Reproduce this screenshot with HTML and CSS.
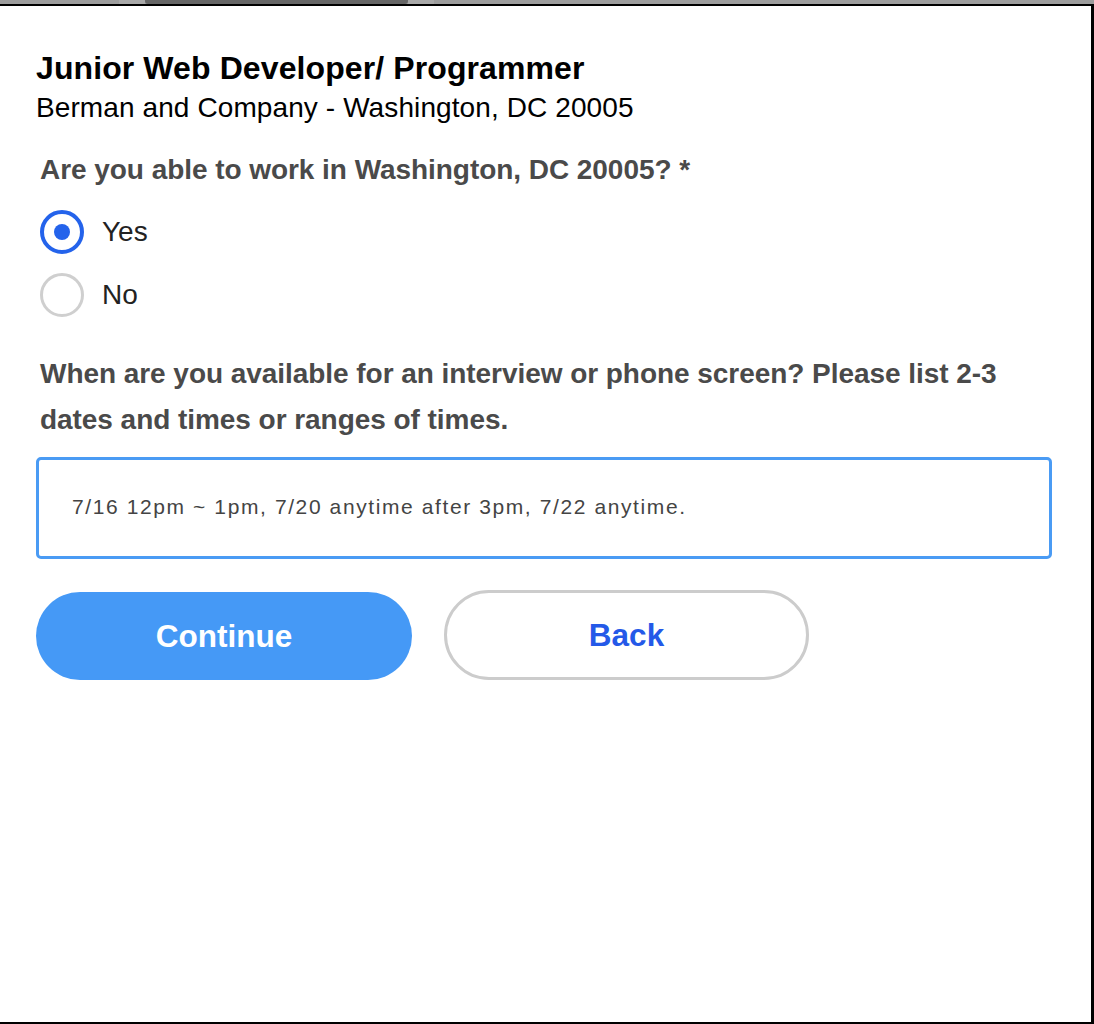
FILE: index.html
```html
<!DOCTYPE html>
<html lang="en">
<head>
<meta charset="utf-8">
<title>Junior Web Developer/ Programmer</title>
<link rel="stylesheet" href="styles.css">
</head>
<body>
<div class="topbar">
  <div class="topbar-gap"></div>
  <div class="topbar-glow"></div>
  <div class="topbar-tab"></div>
  <div class="topbar-glow"></div>
</div>
<main class="frame">
  <div class="content">
    <h1 class="title">Junior Web Developer/ Programmer</h1>
    <p class="company">Berman and Company - Washington, DC 20005</p>

    <div class="question q-location">
      <div class="q-label">Are you able to work in Washington, DC 20005? *</div>
      <div class="options">
        <div class="option">
          <span class="radio checked"><span class="radio-dot"></span></span>
          <span class="option-text">Yes</span>
        </div>
        <div class="option">
          <span class="radio"></span>
          <span class="option-text">No</span>
        </div>
      </div>
    </div>

    <div class="question q-availability">
      <div class="q-label q-label-tall">When are you available for an interview or phone screen? Please list 2-3 dates and times or ranges of times.</div>
      <div class="text-input">7/16 12pm ~ 1pm, 7/20 anytime after 3pm, 7/22 anytime.</div>
    </div>

    <div class="actions">
      <button class="btn btn-primary" type="button">Continue</button>
      <button class="btn btn-secondary" type="button">Back</button>
    </div>
  </div>
</main>
</body>
</html>
```

FILE: styles.css
```css
* {
  box-sizing: border-box;
}

html, body {
  margin: 0;
  padding: 0;
  background: #ffffff;
}

body {
  width: 1094px;
  height: 1024px;
  overflow: hidden;
  font-family: "Liberation Sans", Arial, Helvetica, sans-serif;
}

.topbar {
  height: 4px;
  display: flex;
  background: #9d9d9d;
}

.topbar-gap {
  width: 119px;
}

.topbar-glow {
  width: 26px;
  background: #a9a9a9;
}

.topbar-tab {
  width: 263px;
  background: #666666;
  border-radius: 0 0 3px 3px;
}

.frame {
  height: 1020px;
  border-top: 2px solid #000000;
  border-right: 3px solid #000000;
  border-bottom: 2px solid #000000;
  background: #ffffff;
}

.content {
  padding: 44px 39px 0 36px;
}

.title {
  margin: 0;
  font-size: 32px;
  line-height: 36px;
  font-weight: 700;
  color: #000000;
  letter-spacing: 0.1px;
}

.company {
  margin: 6px 0 0;
  font-size: 28px;
  line-height: 32px;
  font-weight: 400;
  color: #000000;
  letter-spacing: 0.1px;
}

.question {
  padding-left: 4px;
}

.q-location {
  margin-top: 30px;
}

.q-label {
  font-size: 28px;
  line-height: 32px;
  font-weight: 700;
  color: #4a4a4a;
  letter-spacing: -0.05px;
}

.q-label-tall {
  line-height: 46px;
}

.options {
  display: flex;
  flex-direction: column;
  gap: 19px;
  margin-top: 24px;
}

.option {
  display: flex;
  align-items: center;
  gap: 18px;
  height: 44px;
}

.radio {
  width: 44px;
  height: 44px;
  border-radius: 50%;
  border: 3px solid #cfcfcf;
  display: flex;
  align-items: center;
  justify-content: center;
  flex: none;
}

.radio.checked {
  border: 4px solid #2463eb;
}

.radio-dot {
  width: 16px;
  height: 16px;
  border-radius: 50%;
  background: #2463eb;
}

.option-text {
  font-size: 28px;
  line-height: 32px;
  color: #222222;
}

.q-availability {
  margin-top: 34px;
  padding-left: 0;
}

.q-availability .q-label {
  padding-left: 4px;
}

.text-input {
  margin-top: 14px;
  height: 102px;
  border: 3px solid #4a9bf4;
  border-radius: 5px;
  padding: 35px 33px 0;
  font-size: 21px;
  line-height: 24px;
  color: #444444;
  letter-spacing: 1.6px;
}

.actions {
  display: flex;
  align-items: flex-end;
  gap: 32px;
  margin-top: 31px;
}

.btn {
  font-family: "Liberation Sans", Arial, Helvetica, sans-serif;
  font-size: 31.5px;
  font-weight: 700;
  border-radius: 46px;
  cursor: pointer;
  padding: 0;
}

.btn-primary {
  width: 376px;
  height: 88px;
  background: #4599f6;
  color: #ffffff;
  border: none;
}

.btn-secondary {
  width: 365px;
  height: 90px;
  background: #ffffff;
  color: #2459e8;
  border: 3px solid #cccccc;
}
```
